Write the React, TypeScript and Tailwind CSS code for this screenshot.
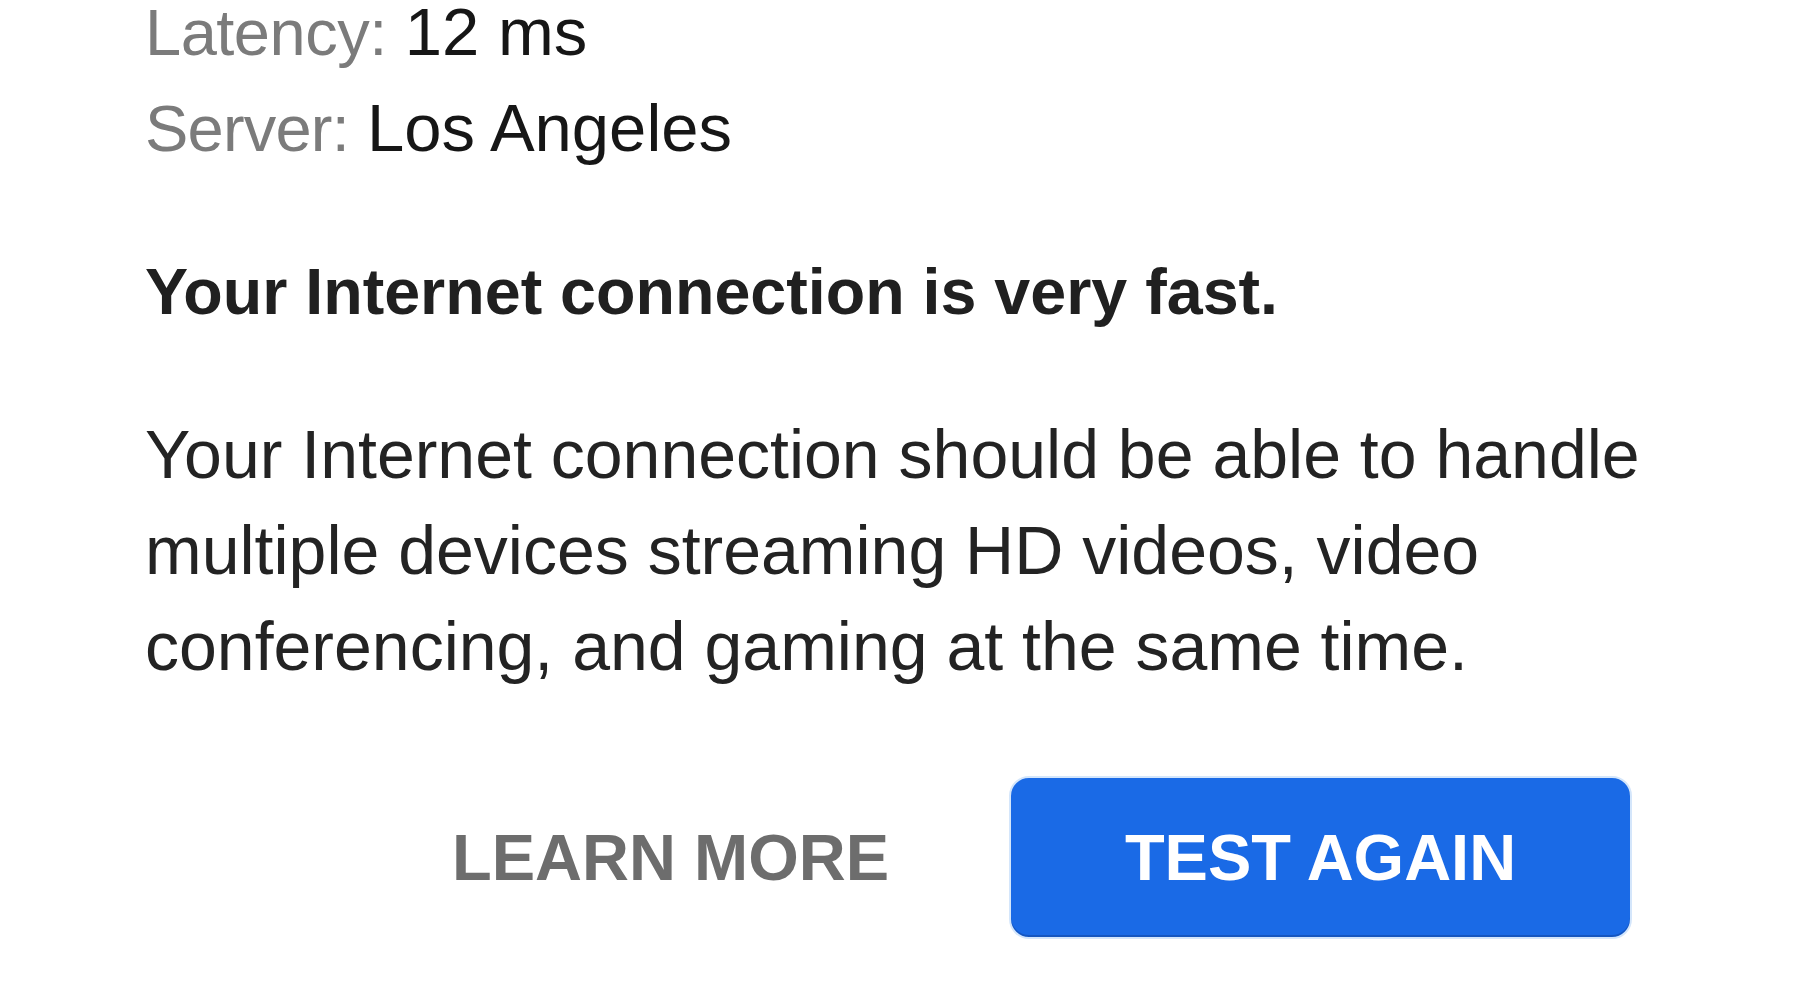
import React from "react";

export default function App() {
  const font = { fontFamily: '"Liberation Sans", Arial, Helvetica, sans-serif' };
  return (
    <div
      className="w-[1800px] h-[1000px] bg-white overflow-hidden pl-[145px]"
      style={font}
    >
      <div className="mt-[-16px] text-[65px] leading-[95px]">
        <div className="whitespace-nowrap">
          <span className="text-[#7b7b7b] tracking-[-0.5px]">Latency:</span>{" "}
          <span className="text-[#161616] text-[67px]">12 ms</span>
        </div>
        <div className="whitespace-nowrap">
          <span className="text-[#7b7b7b] tracking-[-0.8px]">Server:</span>{" "}
          <span className="text-[#161616] text-[67px]">Los Angeles</span>
        </div>
      </div>

      <h1 className="mt-[76px] text-[64.6px] leading-[80px] font-bold text-[#202020] whitespace-nowrap">
        Your Internet connection is very fast.
      </h1>

      <p className="mt-[74px] w-[1580px] text-[68px] leading-[96px] text-[#232323]">
        Your Internet connection should be able to handle multiple devices
        streaming HD videos, video conferencing, and gaming at the same time.
      </p>

      <div className="mt-[82px] w-[1487px] flex items-center justify-end gap-[120px]">
        <button className="text-[65px] font-bold text-[#6d6d6d] whitespace-nowrap leading-none">
          LEARN MORE
        </button>
        <button className="w-[623px] h-[163px] rounded-[20px] bg-[#1a6ae6] border-2 border-[#d4e6fb] flex items-center justify-center shadow-[inset_0_-2px_0_#1556c0]">
          <span className="text-[65px] font-bold text-white whitespace-nowrap leading-none">
            TEST AGAIN
          </span>
        </button>
      </div>
    </div>
  );
}
